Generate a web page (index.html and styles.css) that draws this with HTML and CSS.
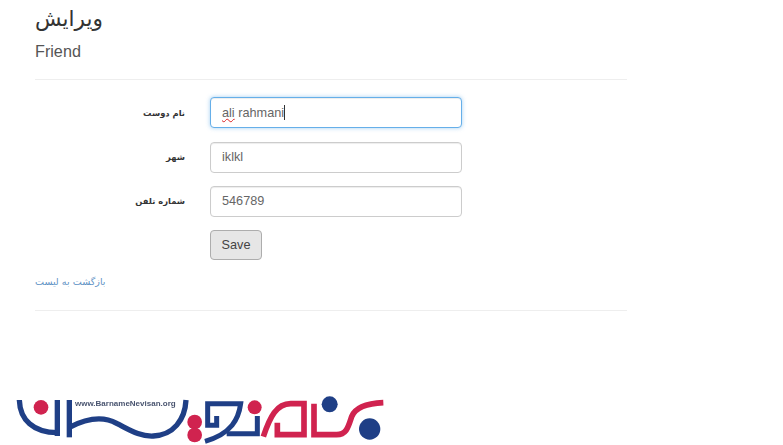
FILE: index.html
```html
<!DOCTYPE html>
<html lang="fa">
<head>
<meta charset="utf-8">
<title>ویرایش</title>
<link rel="stylesheet" href="styles.css">
</head>
<body>
<main class="page">
  <h2 class="title">ویرایش</h2>
  <h4 class="subtitle">Friend</h4>
  <hr class="rule rule-top">
  <form class="form">
    <div class="row">
      <label class="label">نام دوست</label>
      <div class="input focused"><span class="misspelt">ali</span>&nbsp;rahmani<span class="caret"></span></div>
    </div>
    <div class="row">
      <label class="label">شهر</label>
      <div class="input">iklkl</div>
    </div>
    <div class="row">
      <label class="label">شماره تلفن</label>
      <div class="input">546789</div>
    </div>
    <div class="row row-btn">
      <span class="label"></span>
      <button class="btn" type="button">Save</button>
    </div>
  </form>
  <a class="back" href="#">بازگشت به لیست</a>
  <hr class="rule rule-bottom">
</main>
<footer class="logo-wrap">
  <svg class="logo" viewBox="0 0 1200 195" xmlns="http://www.w3.org/2000/svg">
    <g fill="none" stroke="#1f3f86" stroke-width="16">
      <path d="M58 60C60 120 100 158 172 158"/>
      <path d="M172 60V168"/>
      <path d="M208 60V172"/>
      <path d="M208 142C260 115 310 108 350 130C390 150 420 170 460 168C520 165 555 120 558 60"/>
    </g>
    <circle cx="123" cy="82" r="22" fill="#d0234f"/>
    <text class="logo-url" x="225" y="78">www.BarnameNevisan.org</text>
    <g fill="#d0234f">
      <circle cx="584" cy="126" r="22"/>
      <circle cx="584" cy="165" r="22"/>
      <circle cx="764" cy="82" r="21"/>
    </g>
    <g fill="none" stroke="#1f3f86" stroke-width="15">
      <path d="M650 108V136H623V71H722C716 116 695 161 615 184"/>
      <path d="M680 161H772V108"/>
    </g>
    <g fill="none" stroke="#d0234f" stroke-width="17">
      <path d="M790 170C810 110 830 71 872 71H912V164H832V128"/>
      <path d="M942 71V164H1010C1040 164 1045 140 1055 110C1065 85 1100 70 1150 68"/>
    </g>
    <g fill="#1f3f86">
      <circle cx="989" cy="73" r="24"/>
      <circle cx="1109" cy="147" r="32"/>
    </g>
  </svg>
</footer>
</body>
</html>
```

FILE: styles.css
```css
* { box-sizing: border-box; }
html, body { margin: 0; padding: 0; background: #fff; }
body {
  width: 783px;
  height: 445px;
  overflow: hidden;
  font-family: "Liberation Sans", Arial, sans-serif;
  color: #555;
  font-size: 13px;
}
.page { width: 627px; padding-left: 35px; }
.title {
  margin: 0;
  padding-top: 4px;
  height: 37px;
  font-family: "DejaVu Sans", sans-serif;
  font-size: 21.6px;
  line-height: 30px;
  font-weight: 400;
  color: #333;
}
.subtitle {
  margin: 0;
  height: 29px;
  font-size: 16.2px;
  line-height: 29px;
  font-weight: 400;
  color: #555;
}
.rule { border: 0; border-top: 1px solid #eee; margin: 0; }
.rule-top { margin-top: 13px; }
.form { margin-top: 17.3px; display: flex; flex-direction: column; gap: 13.3px; }
.row { display: flex; align-items: center; }
.label {
  width: 150px;
  margin-right: 25px;
  text-align: right;
  font-family: "DejaVu Sans", sans-serif;
  font-size: 8.4px;
  font-weight: 700;
  color: #333;
}
.input {
  width: 252px;
  height: 31px;
  padding: 0 11px;
  display: flex;
  align-items: center;
  background: #fff;
  border: 1px solid #ccc;
  border-radius: 4px;
  box-shadow: inset 0 1px 1px rgba(0, 0, 0, .075);
  white-space: pre;
  font-size: 12.7px;
  color: #666;
}
.focused {
  border-color: #66afe9;
  box-shadow: inset 0 1px 1px rgba(0, 0, 0, .075), 0 0 4px rgba(102, 175, 233, .6);
}
.misspelt { text-decoration: underline wavy #d22; text-decoration-thickness: 1px; }
.caret { width: 1px; height: 15px; background: #333; }
.btn {
  width: 52px;
  height: 30px;
  padding: 0;
  background: #e6e6e6;
  border: 1px solid #adadad;
  border-radius: 4px;
  font-family: "Liberation Sans", Arial, sans-serif;
  font-size: 12.7px;
  color: #444;
}
.back {
  display: block;
  margin-top: 14px;
  height: 15px;
  font-family: "DejaVu Sans", sans-serif;
  font-size: 9.6px;
  line-height: 15px;
  color: #5f93c5;
  text-decoration: none;
}
.rule-bottom { margin-top: 21px; }
.logo-wrap { margin-top: 69px; }
.logo { display: block; width: 400px; height: 65px; filter: blur(.4px); }
.logo-url {
  font-family: "Liberation Sans", Arial, sans-serif;
  font-size: 24px;
  font-weight: 700;
  fill: #4a5570;
}
```
